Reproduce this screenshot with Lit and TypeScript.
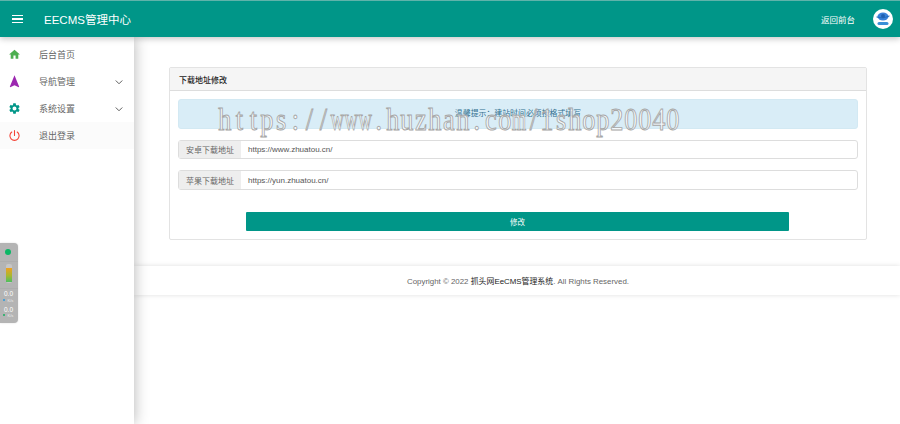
import { LitElement, html, css } from "lit";
import { customElement } from "lit/decorators.js";

const WATERMARK = "https://www.huzhan.com/1shop20040";
const chevron = html`<svg class="ch" viewBox="0 0 24 24"><path fill="none" stroke="#555" stroke-width="1.9" d="M5.5 9l6.5 6.5L18.5 9"/></svg>`;

@customElement("app-root")
export class AppRoot extends LitElement {
  static styles = css`
    :host { display: block; width: 900px; height: 424px; overflow: hidden; position: relative; background: #fff; font-family: "Liberation Sans", "Noto Sans CJK SC", sans-serif; color: #333; }
    * { box-sizing: border-box; }
    .top { height: 37px; background: #009688; display: flex; align-items: center; color: #fff; box-shadow: 0 2px 6px rgba(0,0,0,.22); position: relative; z-index: 3; border-top: 1px solid #5fb3aa; }
    .burger { margin-left: 12px; width: 10.5px; height: 8px; display: flex; flex-direction: column; justify-content: space-between; }
    .burger i { display: block; height: 1.2px; background: #fff; }
    .brand { margin-left: 21.5px; font-size: 11.5px; }
    .spacer { flex: 1; }
    .back { font-size: 8.5px; margin-right: 18px; }
    .avatar { margin-right: 7px; width: 20px; height: 20px; display: block; }
    .body { display: flex; height: 387px; }
    .side { width: 134px; flex: none; background: #fff; box-shadow: 0 0 14px rgba(0,0,0,.3); position: relative; z-index: 2; padding-top: 4px; }
    .item { height: 27px; display: flex; align-items: center; font-size: 9px; color: #666; position: relative; }
    .item.hover { background: #fbfbfb; }
    .item svg.ic { margin-left: 8px; width: 13px; height: 13px; flex: none; }
    .item svg.ic.nav { margin-left: 7px; width: 15px; height: 15px; margin-right: -1px; }
    .item span { margin-left: 18px; }
    .item svg.ch { position: absolute; left: 112.5px; width: 12px; height: 12px; }
    .main { flex: 1; padding-top: 30px; }
    .card { margin-left: 35px; width: 698px; height: 173px; border: 1px solid #e3e3e3; border-radius: 2px; }
    .card-h { height: 23px; background: #f5f5f5; border-bottom: 1px solid #ddd; font-size: 8px; padding-left: 9px; display: flex; align-items: center; color: #222; font-weight: 500; }
    .card-b { padding: 8px 8px 0; }
    .alert { height: 30px; background: #d9edf7; border: 1px solid #d3e9f3; border-radius: 3px; font-size: 7.9px; color: #31708f; display: flex; align-items: center; justify-content: center; padding-bottom: 3px; }
    .group { height: 19px; display: flex; border: 1px solid #ddd; border-radius: 3px; margin-top: 11px; font-size: 8px; }
    .group + .group { height: 20px; }
    .addon { width: 62px; background: #eee; color: #666; display: flex; align-items: center; justify-content: center; }
    .val { flex: 1; display: flex; align-items: center; padding-left: 7px; color: #555; font-size: 8px; }
    .btn { margin: 22px 0 0 68px; width: 543px; height: 19px; background: #009688; color: #fff; font-size: 7.5px; display: flex; align-items: center; justify-content: center; border-radius: 1px; }
    .gap { height: 26px; }
    .foot { height: 29px; box-shadow: 0 0 5px rgba(0,0,0,.13); font-size: 7.9px; color: #666; display: flex; align-items: center; justify-content: center; padding-left: 2px; }
    .foot b { font-weight: 400; color: #222; }
    .wm { position: absolute; left: 218px; top: 102px; display: flex; font-family: "Liberation Serif", serif; font-size: 31px; line-height: 36px; color: rgba(255,255,255,.75); -webkit-text-stroke: 0.95px #a6a6a6; white-space: nowrap; z-index: 4; pointer-events: none; }
    .c { display: flex; width: 14px; justify-content: center; }
    .g { display: block; transform: scaleX(.85); }
    .c.wide .g { transform: scaleX(.6); }
    .widget { position: absolute; left: 0; top: 243px; width: 18px; height: 80px; background: #b4b4b4; border-radius: 0 4px 4px 0; z-index: 5; color: #fff; box-shadow: 0 0 2px rgba(0,0,0,.15); }
    .dot { position: absolute; left: 5px; top: 6px; width: 6px; height: 6px; border-radius: 50%; background: #0cb765; }
    .sep { position: absolute; left: 0; right: 0; height: 1px; background: #adadad; }
    .sep.a { top: 18px; }
    .sep.b { top: 45px; }
    .meter-bg { position: absolute; left: 6px; top: 21px; width: 6px; height: 19px; background: #c6c6c6; border-radius: 2px; }
    .meter { position: absolute; left: 6px; top: 25px; width: 6px; height: 14px; background: linear-gradient(#f0a020, #a8b830 55%, #4cc060); }
    .n { position: absolute; left: 4px; font-size: 6.5px; color: #fff; line-height: 7px; }
    .n.a { top: 47px; }
    .n.b { top: 62.5px; }
    .s { position: absolute; left: 3px; display: flex; align-items: center; gap: 2.5px; font-size: 4px; line-height: 5px; color: #eee; white-space: nowrap; }
    .s.a { top: 54.5px; }
    .s.b { top: 69.5px; }
    .s i { display: block; width: 2px; height: 2.5px; background: #2a9be0; border-radius: 1px; }
    .s.b i { background: #16b060; }
  `;

  render() {
    return html`
      <div class="top">
        <div class="burger"><i></i><i></i><i></i></div>
        <div class="brand">EECMS管理中心</div>
        <div class="spacer"></div>
        <div class="back">返回前台</div>
        <svg class="avatar" viewBox="0 0 20 20">
          <circle cx="10" cy="10" r="10" fill="#fff"/>
          <ellipse cx="10" cy="7.5" rx="5.5" ry="4" fill="#3a80d8"/>
          <path d="M3.5 8q6.5 2.5 13-1" stroke="#1f6cc0" stroke-width="1" fill="none"/>
          <circle cx="10" cy="7" r="2" fill="#1f5fb0"/>
          <rect x="4.5" y="13" width="11" height="3" rx="1.5" fill="#3a90d8"/>
        </svg>
      </div>
      <div class="body">
        <div class="side">
          <div class="item">
            <svg class="ic" viewBox="0 0 24 24"><path fill="#4caf50" d="M10 20v-6h4v6h5v-8h3L12 3 2 12h3v8z"/></svg><span>后台首页</span>
          </div>
          <div class="item">
            <svg class="ic nav" viewBox="0 0 24 24"><path fill="#9c27b0" d="M12 2 4.5 20.3l.7.7L12 18l6.8 3 .7-.7z"/></svg><span>导航管理</span>
            ${chevron}
          </div>
          <div class="item">
            <svg class="ic" viewBox="0 0 24 24"><path fill="#009688" d="M19.14 12.94c.04-.3.06-.61.06-.94s-.02-.64-.07-.94l2.03-1.58a.49.49 0 0 0 .12-.61l-1.92-3.32a.49.49 0 0 0-.59-.22l-2.39.96c-.5-.38-1.03-.7-1.62-.94l-.36-2.54a.48.48 0 0 0-.48-.41h-3.84c-.24 0-.43.17-.47.41l-.36 2.54c-.59.24-1.13.57-1.62.94l-2.39-.96c-.22-.08-.47 0-.59.22L2.74 8.87c-.12.21-.08.47.12.61l2.03 1.58c-.05.3-.09.63-.09.94s.02.64.07.94l-2.03 1.58a.49.49 0 0 0-.12.61l1.92 3.32c.12.22.37.29.59.22l2.39-.96c.5.38 1.03.7 1.62.94l.36 2.54c.05.24.24.41.48.41h3.84c.24 0 .44-.17.47-.41l.36-2.54c.59-.24 1.13-.56 1.62-.94l2.39.96c.22.08.47 0 .59-.22l1.92-3.32c.12-.22.07-.47-.12-.61l-2.01-1.58zM12 15.6c-1.98 0-3.6-1.62-3.6-3.6s1.62-3.6 3.6-3.6 3.6 1.62 3.6 3.6-1.62 3.6-3.6 3.6z"/></svg><span>系统设置</span>
            ${chevron}
          </div>
          <div class="item hover">
            <svg class="ic" viewBox="0 0 24 24"><path fill="none" stroke="#f44336" stroke-width="2" stroke-linecap="round" d="M12 3v9M7 5.6a8.5 8.5 0 1 0 10 0"/></svg><span>退出登录</span>
          </div>
        </div>
        <div class="main">
          <div class="card">
            <div class="card-h">下载地址修改</div>
            <div class="card-b">
              <div class="alert">温馨提示：建站时间必须按格式填写</div>
              <div class="group"><div class="addon">安卓下载地址</div><div class="val">https://www.zhuatou.cn/</div></div>
              <div class="group"><div class="addon">苹果下载地址</div><div class="val">https://yun.zhuatou.cn/</div></div>
              <div class="btn">修改</div>
            </div>
          </div>
          <div class="gap"></div>
          <div class="foot"><span>Copyright © 2022 <b>抓头网EeCMS管理系统</b>. All Rights Reserved.</span></div>
        </div>
      </div>
      <div class="wm">${[...WATERMARK].map(
        (ch) => html`<span class="c ${ch === "w" || ch === "m" ? "wide" : ""}"><span class="g">${ch}</span></span>`
      )}</div>
      <div class="widget">
        <div class="dot"></div>
        <div class="sep a"></div>
        <div class="meter-bg"></div>
        <div class="meter"></div>
        <div class="sep b"></div>
        <div class="n a">0.0</div>
        <div class="s a"><i></i>K/s</div>
        <div class="n b">0.0</div>
        <div class="s b"><i></i>K/s</div>
      </div>
    `;
  }
}
